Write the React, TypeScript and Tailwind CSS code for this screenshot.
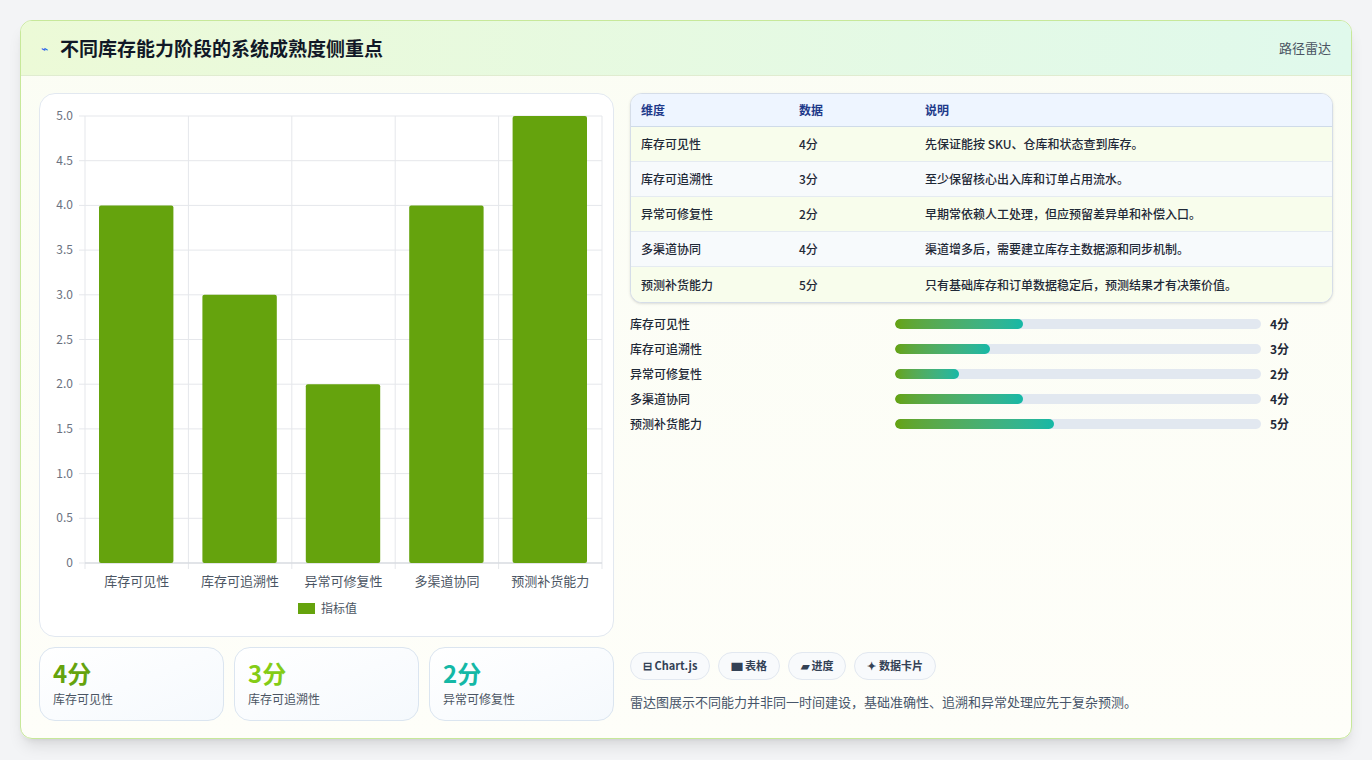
import React from "react";

const F = { fontFamily: '"Noto Sans CJK SC", "Noto Sans", sans-serif' };
const rows = [
  ["库存可见性", "4分", "先保证能按 SKU、仓库和状态查到库存。", 4, 35],
  ["库存可追溯性", "3分", "至少保留核心出入库和订单占用流水。", 3, 26],
  ["异常可修复性", "2分", "早期常依赖人工处理，但应预留差异单和补偿入口。", 2, 17.5],
  ["多渠道协同", "4分", "渠道增多后，需要建立库存主数据源和同步机制。", 4, 35],
  ["预测补货能力", "5分", "只有基础库存和订单数据稳定后，预测结果才有决策价值。", 5, 43.5],
] as const;

function Chart() {
  const x0 = 45, x1 = 562, y0 = 22, y1 = 469;
  const unit = (y1 - y0) / 5;
  const cw = (x1 - x0) / 5;
  const ticks = [0, 0.5, 1, 1.5, 2, 2.5, 3, 3.5, 4, 4.5, 5];
  return (
    <svg width="574" height="543" style={F}>
      {ticks.map((t) => {
        const y = y1 - t * unit;
        return (
          <g key={t}>
            <line x1={x0 - 6} x2={x1} y1={y} y2={y} stroke="#e5e7eb" />
            <text x={33} y={y + 4} textAnchor="end" fontSize="12" fill="#6b7280">
              {t === 0 ? "0" : t.toFixed(1)}
            </text>
          </g>
        );
      })}
      {[0, 1, 2, 3, 4, 5].map((i) => (
        <line key={i} x1={x0 + i * cw} x2={x0 + i * cw} y1={y0} y2={y1 + 6} stroke="#e5e7eb" />
      ))}
      <line x1={x0} x2={x1} y1={y1} y2={y1} stroke="#d1d5db" />
      {rows.map((r, i) => {
        const h = (r[3] as number) * unit;
        return (
          <g key={i}>
            <rect x={x0 + i * cw + 14} y={y1 - h} width={cw - 29} height={h} fill="#65a30d" rx="2" />
            <text x={x0 + i * cw + cw / 2} y={y1 + 23} textAnchor="middle" fontSize="13" fill="#4b5563">
              {r[0]}
            </text>
          </g>
        );
      })}
      <rect x={258} y={509} width={17} height={11} fill="#65a30d" />
      <text x={281} y={519} fontSize="12" fill="#4b5563">指标值</text>
    </svg>
  );
}

export default function App() {
  return (
    <div className="w-[1372px] h-[760px] bg-[#f3f4f6] p-[20px] pb-[20px]" style={F}>
      <div className="h-[719px] rounded-xl border border-[#c7e89a] overflow-hidden flex flex-col bg-gradient-to-b from-[#fbfdf4] to-[#fefef9] shadow-lg">
        <div className="h-[55px] shrink-0 flex items-center justify-between px-5 bg-gradient-to-r from-[#ecfad7] to-[#e0f9ec] border-b border-[#e0ecd0]">
          <div className="flex items-center gap-3">
            <span className="text-[#2563eb] text-xs">⌁</span>
            <span className="text-[19px] font-bold text-[#111827]">不同库存能力阶段的系统成熟度侧重点</span>
          </div>
          <span className="text-[13px] text-[#4b5563]">路径雷达</span>
        </div>
        <div className="flex-1 flex gap-4 px-[18px] pt-[17px] pb-[18px]">
          <div className="w-[575px] flex flex-col gap-[10px]">
            <div className="h-[544px] rounded-2xl border border-[#e2e8f0] bg-white">
              <Chart />
            </div>
            <div className="grid grid-cols-3 gap-[10px] h-[74px]">
              {[["4分", "库存可见性", "text-[#65a30d]"], ["3分", "库存可追溯性", "text-[#84cc16]"], ["2分", "异常可修复性", "text-[#14b8a6]"]].map((c) => (
                <div key={c[1]} className="rounded-2xl border border-[#dbe5f0] bg-gradient-to-br from-white to-[#f5f9fd] px-[13px] pt-[10px]">
                  <div className={`text-[24px] font-bold leading-[30px] ${c[2]}`}>{c[0]}</div>
                  <div className="text-[12px] text-[#4b5563] mt-[2px]">{c[1]}</div>
                </div>
              ))}
            </div>
          </div>
          <div className="flex-1 flex flex-col">
            <div className="rounded-xl border border-[#d5dde8] overflow-hidden bg-white shadow-sm">
              <div className="flex h-[33px] items-center bg-[#eef5ff] border-b border-[#cfdbe9] text-[12px] font-bold text-[#1e3a8a]">
                <div className="w-[168px] pl-[10px]">维度</div>
                <div className="w-[126px]">数据</div>
                <div>说明</div>
              </div>
              {rows.map((r, i) => (
                <div key={i} className={`flex h-[35px] items-center text-[12px] font-medium text-[#1f2937] ${i % 2 === 0 ? "bg-[#f8fdec]" : "bg-[#f7fafc]"} ${i < 4 ? "border-b border-[#e5ebf1]" : ""}`}>
                  <div className="w-[168px] pl-[10px]">{r[0]}</div>
                  <div className="w-[126px]">{r[1]}</div>
                  <div>{r[2]}</div>
                </div>
              ))}
            </div>
            <div className="flex flex-col gap-[7px] mt-[12px]">
              {rows.map((r, i) => (
                <div key={i} className="flex items-center h-[18px] text-[12px] text-[#1f2937] font-medium">
                  <div className="w-[265px]">{r[0]}</div>
                  <div className="w-[366px] h-[10px] rounded-full bg-[#e2e8f0] overflow-hidden">
                    <div className="h-full rounded-full bg-gradient-to-r from-[#65a30d] to-[#14b8a6]" style={{ width: `${r[4]}%` }} />
                  </div>
                  <div className="ml-[9px] font-bold">{r[1]}</div>
                </div>
              ))}
            </div>
            <div className="flex-1" />
            <div className="flex gap-2 mb-[12px]">
              {["⊟ Chart.js", "▆ 表格", "▰ 进度", "✦ 数据卡片"].map((t) => (
                <span key={t} className="h-[28px] px-3 flex items-center rounded-full border border-[#e2e8f0] bg-[#f8fafc] text-[11px] font-bold text-[#334155]">{t}</span>
              ))}
            </div>
            <div className="text-[13px] text-[#475569] mb-[10px]">雷达图展示不同能力并非同一时间建设，基础准确性、追溯和异常处理应先于复杂预测。</div>
          </div>
        </div>
      </div>
    </div>
  );
}
